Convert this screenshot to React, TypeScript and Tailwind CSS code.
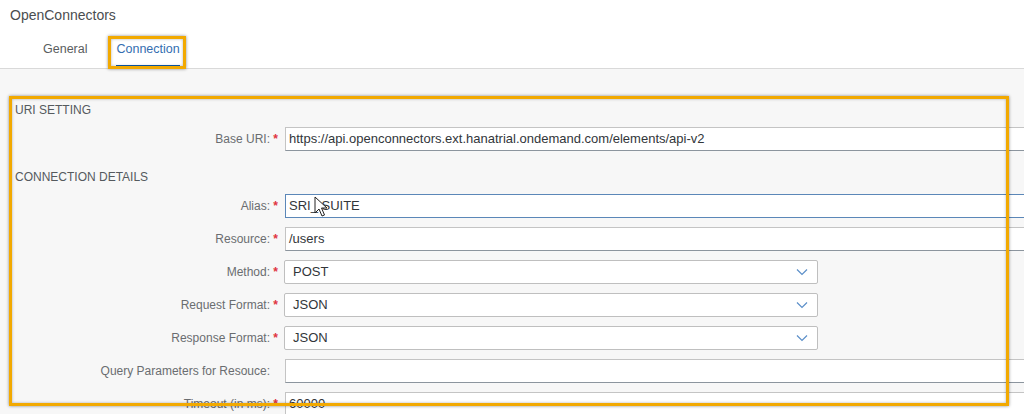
import React from 'react';

const font = { fontFamily: '"Liberation Sans", Arial, sans-serif' };

type Row = {
  label: string;
  value: string;
  required?: boolean;
  kind?: 'input' | 'select';
  focused?: boolean;
};

const rows: Row[] = [
  { label: 'Alias:', value: 'SRI_ SUITE', required: true, focused: true },
  { label: 'Resource:', value: '/users', required: true },
  { label: 'Method:', value: 'POST', required: true, kind: 'select' },
  { label: 'Request Format:', value: 'JSON', required: true, kind: 'select' },
  { label: 'Response Format:', value: 'JSON', required: true, kind: 'select' },
  { label: 'Query Parameters for Resouce:', value: '' },
  { label: 'Timeout (in ms):', value: '60000', required: true },
];

function Chevron() {
  return (
    <svg width="12" height="8" viewBox="0 0 12 8" fill="none">
      <path d="M1 1.5 L6 6.5 L11 1.5" stroke="#5b8fc9" strokeWidth="1.2" />
    </svg>
  );
}

function Label({ text, required }: { text: string; required?: boolean }) {
  return (
    <div className="w-[285px] shrink-0 flex items-center justify-end pr-[4px] text-[12px] text-[#6a6d70]">
      <span>{text}</span>
      <span className="w-[11px] text-center text-[#e0343f] font-bold">{required ? '*' : ''}</span>
    </div>
  );
}

function Field({ row }: { row: Row }) {
  if (row.kind === 'select') {
    return (
      <div className="flex h-[24px] items-stretch">
        <Label text={row.label} required={row.required} />
        <div className="-ml-[1px] w-[534px] flex items-center justify-between bg-white border border-[#bfbfbf] rounded-[2px] pl-[8px] pr-[9px] text-[13px] text-[#32363a]">
          <span>{row.value}</span>
          <Chevron />
        </div>
      </div>
    );
  }
  return (
    <div className="flex h-[24px] items-stretch">
      <Label text={row.label} required={row.required} />
      <div
        className={
          'w-[760px] shrink-0 flex items-center bg-white border pl-[3px] text-[13px] text-[#32363a] ' +
          (row.focused ? 'border-[#5b87b8]' : 'border-[#c4c4c4] border-b-[#8c959e]')
        }
      >
        {row.value}
      </div>
    </div>
  );
}

function Cursor() {
  return (
    <svg className="absolute left-[314px] top-[196px]" width="14" height="22" viewBox="0 0 14 22">
      <path
        d="M1 1 L1 17 L5 13 L8 20 L10.5 19 L7.5 12 L13 12 Z"
        fill="#ffffff"
        stroke="#222222"
        strokeWidth="1"
        strokeLinejoin="round"
      />
    </svg>
  );
}

export default function App() {
  return (
    <div className="relative w-[1024px] h-[414px] overflow-hidden bg-[#f7f7f7]" style={font}>
      {/* Header */}
      <header className="bg-white h-[69px] border-b border-[#d9d9d9]">
        <div className="h-[30px] flex items-center pl-[10px] text-[14px] text-[#4a4d50]">OpenConnectors</div>
        <nav className="flex h-[38px] pl-[43px] gap-[29px] text-[12.5px]">
          <div className="flex flex-col">
            <div className="flex-1 flex items-center pt-[4px] text-[#5a5d60]">General</div>
            <div className="h-[3px]" />
          </div>
          <div className="flex flex-col">
            <div className="flex-1 flex items-center pt-[4px] text-[#346eb0]">Connection</div>
            <div className="h-[3px] bg-[#0a5cb0]" />
          </div>
        </nav>
      </header>

      {/* Body */}
      <main className="pt-[34px]">
        <div className="pl-[15px] h-[14px] flex items-center text-[12px] text-[#555a5e]">URI SETTING</div>
        <div className="mt-[10px]">
          <Field row={{ label: 'Base URI:', value: 'https://api.openconnectors.ext.hanatrial.ondemand.com/elements/api-v2', required: true }} />
        </div>
        <div className="mt-[19px] pl-[15px] h-[14px] flex items-center text-[12px] text-[#555a5e]">CONNECTION DETAILS</div>
        <div className="mt-[10px] flex flex-col gap-[9px]">
          {rows.map((r) => (
            <Field key={r.label} row={r} />
          ))}
        </div>
      </main>

      <Cursor />

      {/* Highlight annotations */}
      <div className="absolute left-[108px] top-[36px] w-[78px] h-[33px] border-[3px] border-[#f2a900] shadow-[0_0_3px_rgba(0,0,0,0.45),inset_0_0_3px_rgba(0,0,0,0.3)]" />
      <div className="absolute left-[9px] top-[96px] w-[1000px] h-[310px] border-[3px] border-[#f2a900] shadow-[0_0_3px_rgba(0,0,0,0.45),inset_0_0_3px_rgba(0,0,0,0.3)]" />
    </div>
  );
}
